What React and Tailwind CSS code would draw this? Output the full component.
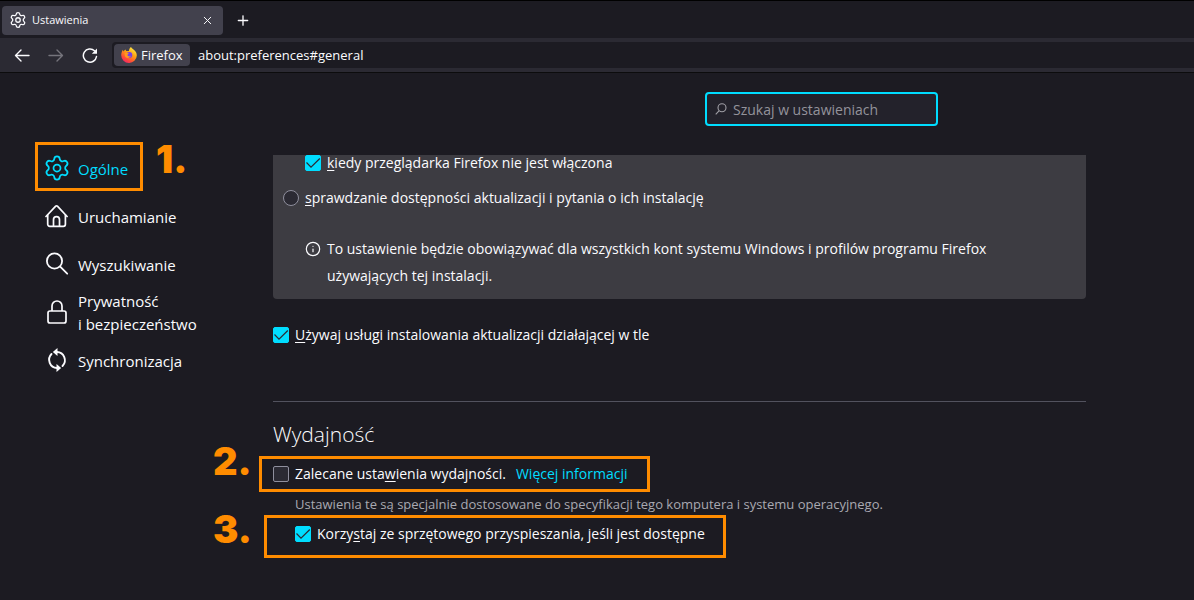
import { Settings, X, Plus, Info } from 'lucide-react';

const GearIcon = () => <Settings size={28} strokeWidth={1.5} className="shrink-0" aria-hidden="true" />;

const HomeIcon = () => (
  <svg viewBox="0 0 24 24" className="size-6" fill="none" stroke="currentColor" strokeWidth="1.7" strokeLinejoin="round" strokeLinecap="round" aria-hidden="true">
    <path d="M1 12.5 10.7 2.2a1.2 1.2 0 0 1 1.7 0l9.7 10.3" />
    <path d="M2.700 11v9.3a2 2 0 0 0 2 2h13.7a2 2 0 0 0 2-2V11" />
    <path d="M8.500 22v-6.300a3 3 0 0 1 6 0V22" />
  </svg>
);

const SearchIcon = () => (
  <svg viewBox="0 0 24 24" className="size-6" fill="none" stroke="currentColor" strokeWidth="1.8" strokeLinecap="round" aria-hidden="true">
    <circle cx="9.500" cy="9" r="7.600" />
    <path d="m15.200 14.700 7 7" />
  </svg>
);

const LockIcon = () => (
  <svg viewBox="0 0 24 24" className="size-6" fill="none" stroke="currentColor" strokeWidth="1.700" aria-hidden="true">
    <rect x="3" y="11" width="18" height="12" rx="2" />
    <path d="M7 11V6a5 5 0 0 1 10 0v5" />
  </svg>
);

const SyncIcon = () => (
  <svg viewBox="0 0 24 24" className="size-6" fill="none" stroke="currentColor" strokeWidth="1.9" strokeLinecap="round" aria-hidden="true">
    <path d="M12 4a8 8.200 0 0 1 5.500 14" />
    <path d="M12 20A8 8.200 0 0 1 6.500 6" />
    <path d="M12.500 0v8L7.800 4z" fill="currentColor" stroke="none" />
    <path d="M11.500 16v8l4.700-4z" fill="currentColor" stroke="none" />
  </svg>
);

const FirefoxLogo = () => (
  <svg viewBox="0 0 16 16" className="size-4" aria-hidden="true">
    <defs>
      <linearGradient id="flame" x1="0.8" y1="0" x2="0.2" y2="1">
        <stop offset="0" stopColor="#fff44f" />
        <stop offset="0.4" stopColor="#ffa20e" />
        <stop offset="0.75" stopColor="#ff4a3a" />
        <stop offset="1" stopColor="#f0206f" />
      </linearGradient>
    </defs>
    <path d="M10 0c.5 1.500 3 2.600 4.300 4.300 1 1.300 1.500 2.800 1.500 4.200A7.700 7.700 0 0 1 8 16 7.700 7.700 0 0 1 .2 8.300C.2 6 1 4 2 2.700c0 .8.200 1.300.5 1.700.6-.9 1.400-1.700 2.200-2 0 .7.200 1.300.7 1.700 1 0 1.800-.2 2.500-.1C8 2.500 8.700 1 10 0z" fill="url(#flame)" />
    <circle cx="8.300" cy="8" r="3" fill="#7542e5" />
    <path d="M3.500 6.300c1.500-1 3-.6 4.500.5-1 .2-1.600.8-1.500 1.500.3 1.200 2.200 1.500 3.500.5-.5 2.200-4.800 3.200-6 .5z" fill="#ff9a1f" />
  </svg>
);

const categories = [
  { id: 'general', label: 'Ogólne', icon: GearIcon, active: true },
  { id: 'home', label: 'Uruchamianie', icon: HomeIcon },
  { id: 'search', label: 'Wyszukiwanie', icon: SearchIcon },
  { id: 'privacy', label: 'Prywatność i\u00a0bezpieczeństwo', icon: LockIcon },
  { id: 'sync', label: 'Synchronizacja', icon: SyncIcon },
];

const Checkbox = ({ id, checked }) => (
  <span className="relative flex size-4 shrink-0">
    <input
      id={id}
      type="checkbox"
      defaultChecked={checked}
      className="peer size-4 appearance-none rounded-xs border border-[#8f8f9d] bg-[#2b2a33] checked:border-[#00ddff] checked:bg-[#00ddff]"
    />
    <svg viewBox="0 0 16 16" className="pointer-events-none absolute inset-0 hidden size-4 peer-checked:block" fill="none" stroke="#2b2a33" strokeWidth="1.2" aria-hidden="true">
      <path d="m1.500 7.500 4.500 4.700L14.800 3.500" />
    </svg>
  </span>
);

const Step = ({ className, children }) => (
  <span className={`absolute font-[Inter] text-[38px] leading-none font-black text-[#ff8c00] ${className}`}>{children}</span>
);

const Frame = ({ className }) => (
  <span className={`pointer-events-none absolute border-3 border-[#ff8c00] ${className}`} />
);

const BrowserChrome = () => (
  <header className="border-b border-[#0c0c0d]">
    <div className="flex h-[38px] items-center border-t border-black pt-px pl-[2px]">
      <div className="flex h-[29px] w-[221px] items-center gap-1 rounded bg-[#42414d] px-2">
        <Settings size={18} strokeWidth={1.7} className="-mx-px" aria-hidden="true" />
        <span className="flex-1 pl-[2px] text-[11px]">Ustawienia</span>
        <button aria-label="Zamknij kartę" className="flex size-4 items-center justify-center"><X size={13} strokeWidth={1.8} /></button>
      </div>
      <button aria-label="Nowa karta" className="ml-3 flex size-4 items-center justify-center"><Plus size={17} strokeWidth={2} /></button>
    </div>

    <div className="flex h-[34px] items-center bg-[#2b2a33] pl-[14px]">
      <div className="flex items-center gap-[18px]">
        <button aria-label="Wstecz">
          <svg viewBox="0 0 16 16" className="size-4" fill="none" stroke="currentColor" strokeWidth="1.400" strokeLinecap="round" strokeLinejoin="round"><path d="M15 8.500H1.500M7 3 1.500 8.500 7 14" /></svg>
        </button>
        <button aria-label="Do przodu" disabled className="text-[#75747c]">
          <svg viewBox="0 0 16 16" className="size-4" fill="none" stroke="currentColor" strokeWidth="1.400" strokeLinecap="round" strokeLinejoin="round"><path d="M1 8.500h13.500M9 3 14.500 8.500 9 14" /></svg>
        </button>
        <button aria-label="Odśwież">
          <svg viewBox="0 0 16 16" className="size-4" fill="none" stroke="currentColor" strokeWidth="1.500" strokeLinecap="round"><path d="M14.500 9.500A6.600 6.600 0 1 1 12.500 3.800" /><path d="M15 1.500v5.200H9.800z" fill="currentColor" stroke="none" /></svg>
        </button>
      </div>
      <div className="ml-[14px] flex h-[26px] flex-1 items-center gap-2 rounded-l bg-[#1c1b22] pl-[2px]">
        <div className="flex h-[22px] w-[76px] items-center gap-1 rounded-sm bg-[#42414d] pl-[7px] text-[13px]">
          <FirefoxLogo />
          <span className="pt-px">Firefox</span>
        </div>
        <input aria-label="Adres" defaultValue="about:preferences#general" className="min-w-0 flex-1 bg-transparent pt-px text-[13px] outline-none" />
      </div>
    </div>
  </header>
);

const Sidebar = () => (
  <nav className="w-[273px] shrink-0 pt-[71px] pl-[45px]">
    <ul>
      {categories.map(({ id, label, icon: Icon, active }) => (
        <li key={id} className="relative flex h-12">
          <a href={`#${id}`} className={`flex w-40 items-center gap-[9px] text-[15px] leading-[23px] ${active ? 'text-[#00ddff]' : ''}`}>
            <span className="flex size-6 shrink-0 items-center justify-center"><Icon /></span>
            <span className="pt-[2px]">{label}</span>
          </a>
          {active && (
            <>
              <Frame className="-top-[2px] -left-[10px] h-[49px] w-[108px]" />
              <Step className="-top-1 left-[111px]">1.</Step>
            </>
          )}
        </li>
      ))}
    </ul>
  </nav>
);

const UpdatePanel = () => (
  <section className="rounded-b bg-[#3d3c42] pr-10 pb-[10px] pl-[10px]">
    <div className="flex h-4 items-center gap-[6px] pl-[22px]">
      <Checkbox id="when-closed" checked />
      <label htmlFor="when-closed"><u className="underline-offset-2">k</u>iedy przeglądarka Firefox nie jest włączona</label>
    </div>
    <div className="mt-[17px] flex items-center gap-[6px]">
      <input id="ask-install" type="radio" className="size-4 appearance-none rounded-full border border-[#8f8f9d] bg-[#2b2a33]" />
      <label htmlFor="ask-install"><u className="underline-offset-2">s</u>prawdzanie dostępności aktualizacji i pytania o ich instalację</label>
    </div>
    <div className="mt-[27px] flex gap-[6px] pl-[22px]">
      <Info size={16} strokeWidth={1.8} className="mt-[6px] shrink-0" aria-hidden="true" />
      <p className="max-w-[700px] leading-[27px]">
        To ustawienie będzie obowiązywać dla wszystkich kont systemu Windows i profilów programu Firefox używających tej instalacji.
      </p>
    </div>
  </section>
);

const Performance = () => (
  <section className="mt-14 border-t border-[#52525e] pt-4">
    <h2 className="text-[21px] leading-8 font-light">Wydajność</h2>
    <div className="relative mt-[14px] flex items-center gap-[6px]">
      <Checkbox id="recommended" />
      <label htmlFor="recommended">Zalecane usta<u className="underline-offset-2">w</u>ienia wydajności.</label>
      <a href="#performance" className="ml-1 text-[#00ddff]">Więcej informacji</a>
      <Frame className="-top-2 -left-[14px] h-9 w-[391px]" />
      <Step className="-top-[22px] -left-[60px]">2.</Step>
    </div>
    <p className="mt-2 pl-[22px] text-[13px] leading-6 text-[#a9a9b1]">
      Ustawienia te są specjalnie dostosowane do specyfikacji tego komputera i systemu operacyjnego.
    </p>
    <div className="relative mt-2 flex items-center gap-[6px] pl-[22px]">
      <Checkbox id="hardware" checked />
      <label htmlFor="hardware">Korzy<u className="underline-offset-2">s</u>taj ze sprzętowego przyspieszania, jeśli jest dostępne</label>
      <Frame className="-top-[9px] -left-[9px] h-[43px] w-[462px]" />
      <Step className="-top-[14px] -left-[60px]">3.</Step>
    </div>
  </section>
);

const App = () => (
  <div className="min-h-screen bg-[#1c1b22] font-['Open_Sans','Noto_Sans',sans-serif] text-sm text-[#fbfbfe]">
    <BrowserChrome />
    <div className="flex">
      <Sidebar />
      <main className="min-w-0 flex-1 pr-[108px] pb-8">
        <div className="flex max-w-[665px] justify-end pt-[19px] pb-[29px]">
          <label className="flex h-[34px] w-[233px] items-center gap-[6px] rounded border-2 border-[#00ddff] bg-[#23222b] pl-2">
            <svg viewBox="0 0 12 12" className="size-3 shrink-0" fill="none" stroke="#a09fa6" strokeWidth="1.100" aria-hidden="true">
              <circle cx="7" cy="4.800" r="4" />
              <path d="M4 7.800.7 11.300" />
            </svg>
            <input type="search" aria-label="Szukaj w ustawieniach" placeholder="Szukaj w ustawieniach" className="min-w-0 flex-1 bg-transparent pt-px outline-none placeholder:text-[#94939b]" />
          </label>
        </div>
        <UpdatePanel />
        <div className="mt-[26px] flex items-center gap-[6px]">
          <Checkbox id="background" checked />
          <label htmlFor="background"><u className="underline-offset-2">U</u>żywaj usługi instalowania aktualizacji działającej w tle</label>
        </div>
        <Performance />
      </main>
    </div>
  </div>
);

export default App;
